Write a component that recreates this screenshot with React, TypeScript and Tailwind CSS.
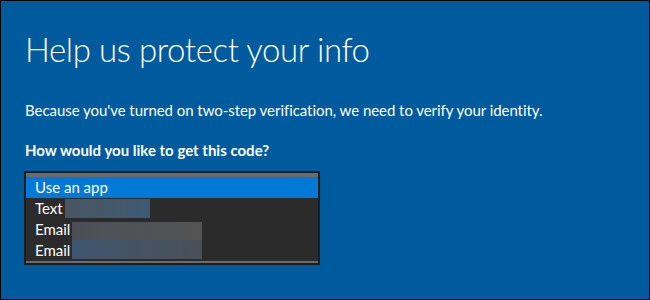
const rowText = "text-[15px] leading-[21px] h-[21px] pl-[9px] flex items-center";

export default function App() {
  return (
    <div
      className="w-[650px] h-[300px] bg-[#005a9e] border border-black text-white overflow-hidden"
      style={{ fontFamily: '"Segoe UI", Lato, sans-serif' }}
    >
      <div className="pl-[24px] pt-[27px]">
        <h1 className="text-[33px] font-light leading-[43px] tracking-[-0.4px]">
          Help us protect your info
        </h1>
        <p className="mt-[29px] text-[15px] leading-[20px] tracking-[-0.05px]">
          Because you've turned on two-step verification, we need to verify your identity.
        </p>
        <p className="mt-[20px] text-[15px] leading-[20px] font-bold">
          How would you like to get this code?
        </p>

        <div className="mt-[11px] -ml-px w-[296px] border-2 border-[#1e1e1e] bg-[#2b2b2b]">
          <div className="h-[4px] bg-[#6b6b6b]" />
          <div className={`${rowText} h-[20px] bg-[#0078d7]`}>Use an app</div>
          <div className={rowText}>
            <span>Text</span>
            <span className="ml-[2px] h-[19px] w-[85px] bg-gradient-to-r from-[#4a5660] to-[#3e5a74]" />
          </div>
          <div className={rowText}>
            <span>Email</span>
            <span className="ml-[2px] mt-[3px] h-[18px] w-[130px] bg-gradient-to-r from-[#4c5056] to-[#545454]" />
          </div>
          <div className={rowText}>
            <span>Email</span>
            <span className="ml-[2px] mb-[2px] h-[19px] w-[130px] bg-gradient-to-r from-[#3d5670] to-[#4a5058]" />
          </div>
          <div className="h-[2px] bg-[#6b6b6b]" />
        </div>
      </div>
    </div>
  );
}
